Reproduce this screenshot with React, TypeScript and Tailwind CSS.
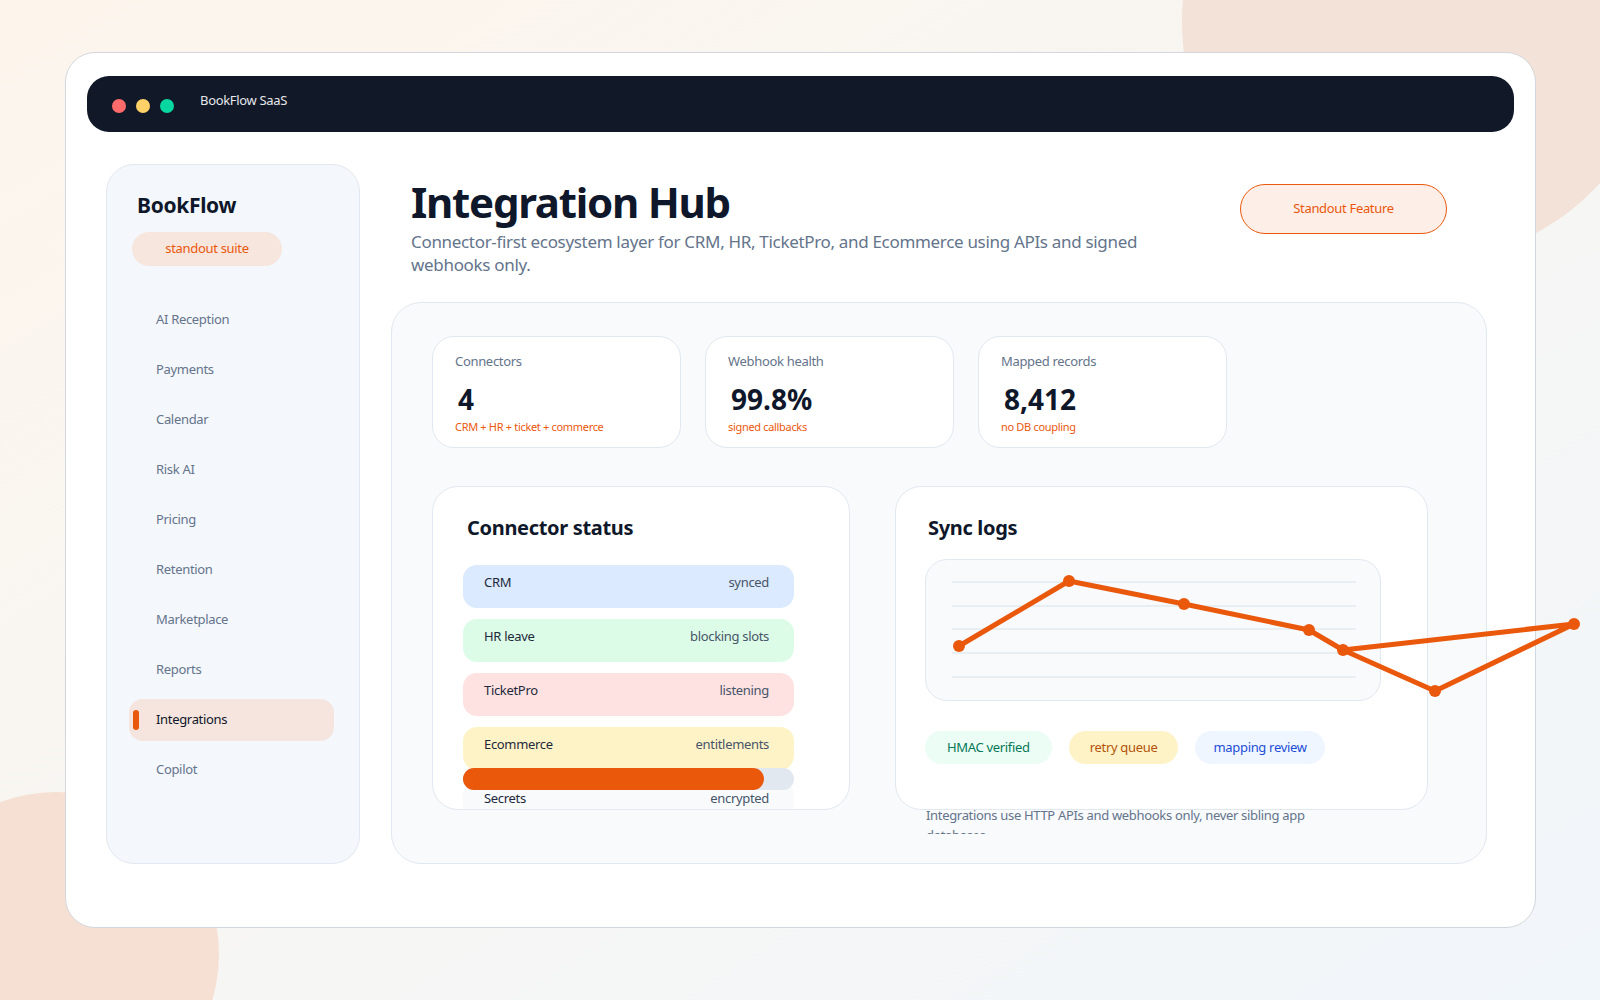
import React from 'react';

const navItems = [
  'AI Reception',
  'Payments',
  'Calendar',
  'Risk AI',
  'Pricing',
  'Retention',
  'Marketplace',
  'Reports',
  'Integrations',
  'Copilot',
];

const stats = [
  { label: 'Connectors', value: '4', note: 'CRM + HR + ticket + commerce' },
  { label: 'Webhook health', value: '99.8%', note: 'signed callbacks' },
  { label: 'Mapped records', value: '8,412', note: 'no DB coupling' },
];

const connectors = [
  { name: 'CRM', state: 'synced', bg: 'bg-[#dbeafe]' },
  { name: 'HR leave', state: 'blocking slots', bg: 'bg-[#dcfce7]' },
  { name: 'TicketPro', state: 'listening', bg: 'bg-[#fee2e2]' },
  { name: 'Ecommerce', state: 'entitlements', bg: 'bg-[#fef3c7]' },
];

// chart points, px inside the chart box
const points: [number, number][] = [
  [33, 86],
  [143, 21],
  [258, 44],
  [383, 70],
  [417, 90],
  [509, 131],
  [648, 64],
  [417, 90],
];

const SyncChart = () => (
  <svg className="absolute inset-0 h-full w-full overflow-visible">
    {[22, 46, 69, 93, 117].map((y) => (
      <line key={y} x1={26} x2={430} y1={y} y2={y} stroke="#e5eaf1" strokeWidth={1.5} />
    ))}
    <polyline
      points={points.map((p) => p.join(',')).join(' ')}
      fill="none"
      stroke="#ea580c"
      strokeWidth={5}
      strokeLinejoin="round"
      strokeLinecap="round"
    />
    {points.slice(0, 7).map(([x, y]) => (
      <circle key={`${x}-${y}`} cx={x} cy={y} r={6} fill="#ea580c" />
    ))}
  </svg>
);

const App = () => {
  return (
    <div className="relative h-[1000px] w-full overflow-hidden bg-gradient-to-br from-[#fdf5ec] via-[#f7f6f3] to-[#f1f6fb] font-['Noto_Sans','Open_Sans',sans-serif] tracking-[-0.02em]">
      {/* background blobs */}
      <div className="absolute left-[1182px] top-[-218px] h-[480px] w-[480px] rounded-full bg-[#f3e2d8]" />
      <div className="absolute left-[-105px] top-[792px] h-[324px] w-[324px] rounded-full bg-[#f6e0d3]" />

      {/* window */}
      <div className="relative ml-[65px] mt-[52px] h-[876px] w-[1471px] rounded-[30px] border border-[#d3d7dd] bg-white">
        {/* title bar */}
        <div className="mx-[21px] mt-[23px] flex h-[56px] items-start rounded-[22px] bg-[#111827] pl-[25px]">
          <div className="mt-[23px] flex gap-[10px]">
            <span className="h-[14px] w-[14px] rounded-full bg-[#ff6b6b]" />
            <span className="h-[14px] w-[14px] rounded-full bg-[#ffd166]" />
            <span className="h-[14px] w-[14px] rounded-full bg-[#06d6a0]" />
          </div>
          <span className="ml-[26px] mt-[15px] text-[13px] leading-[18px] text-[#e5e7eb]">BookFlow SaaS</span>
        </div>

        <div className="ml-[40px] mt-[32px] flex gap-[31px]">
          {/* sidebar */}
          <aside className="h-[700px] w-[254px] rounded-[28px] border border-[#e2e8f0] bg-[#f4f7fb] pt-[26px]">
            <h2 className="pl-[30px] text-[21px] font-bold leading-[28px] text-[#0f172a]">BookFlow</h2>
            <div className="ml-[25px] mt-[13px] flex h-[34px] w-[150px] items-center justify-center rounded-full bg-[#f6e6de] text-[13px] text-[#ea580c]">
              standout suite
            </div>
            <nav className="ml-[22px] mt-[33px] flex flex-col gap-[8px]">
              {navItems.map((item) => {
                const active = item === 'Integrations';
                return (
                  <div
                    key={item}
                    className={`flex h-[42px] w-[205px] items-center rounded-[14px] pl-[4px] text-[13px] ${
                      active ? 'bg-[#f5e5de] text-[#0f172a]' : 'text-[#64748b]'
                    }`}
                  >
                    <span className={`h-[20px] w-[6px] rounded-full ${active ? 'bg-[#ea580c]' : ''}`} />
                    <span className="ml-[17px]">{item}</span>
                  </div>
                );
              })}
            </nav>
          </aside>

          {/* main */}
          <main className="flex w-[1096px] flex-col">
            <header className="flex items-start justify-between pl-[20px] pr-[40px] pt-[14px]">
              <div>
                <h1 className="text-[42px] font-bold leading-[48px] tracking-[-0.03em] text-[#0f172a]">Integration Hub</h1>
                <p className="mt-[4px] max-w-[760px] text-[17px] leading-[23px] text-[#64748b]">
                  Connector-first ecosystem layer for CRM, HR, TicketPro, and Ecommerce using APIs and signed webhooks only.
                </p>
              </div>
              <button className="mt-[6px] h-[50px] w-[207px] rounded-full border-[1.5px] border-[#ea580c] bg-[#fdeee7] text-[13px] text-[#ea580c]">
                Standout Feature
              </button>
            </header>

            <section className="mt-[26px] h-[562px] rounded-[30px] border border-[#e2e8f0] bg-[#f8fafc] pl-[40px] pt-[33px]">
              {/* stats */}
              <div className="flex gap-[24px]">
                {stats.map((s) => (
                  <div key={s.label} className="h-[112px] w-[249px] rounded-[22px] border border-[#e2e8f0] bg-white px-[22px] pt-[15px]">
                    <div className="text-[13px] leading-[18px] text-[#64748b]">{s.label}</div>
                    <div className="ml-[3px] mt-[12px] text-[28px] font-bold leading-[34px] tracking-normal text-[#0f172a]">{s.value}</div>
                    <div className="mt-[3px] text-[11px] leading-[16px] text-[#ea580c]">{s.note}</div>
                  </div>
                ))}
              </div>

              <div className="mt-[38px] flex items-start gap-[45px]">
                {/* connector status */}
                <div className="h-[324px] w-[418px] overflow-hidden rounded-[26px] border border-[#e2e8f0] bg-white pl-[30px] pt-[27px]">
                  <h3 className="pl-[4px] text-[20px] font-bold leading-[28px] text-[#0f172a]">Connector status</h3>
                  <div className="mt-[23px] flex flex-col">
                    {connectors.map((c, i) => (
                      <div
                        key={c.name}
                        className={`flex h-[43px] w-[331px] items-start justify-between rounded-[14px] pl-[21px] pr-[25px] pt-[8px] text-[13px] leading-[18px] ${c.bg} ${
                          i > 0 ? 'mt-[11px]' : ''
                        }`}
                      >
                        <span className="text-[#1e293b]">{c.name}</span>
                        <span className="text-[#475569]">{c.state}</span>
                      </div>
                    ))}
                    <div className="relative z-10 -mt-[2px] h-[22px] w-[331px] rounded-full bg-[#e2e8f0]">
                      <div className="h-full w-[91%] rounded-full bg-[#ea580c]" />
                    </div>
                    <div className="-mt-[9px] flex h-[43px] w-[331px] items-start justify-between rounded-[14px] bg-[#f8fafc] pl-[21px] pr-[25px] pt-[8px] text-[13px] leading-[18px]">
                      <span className="text-[#1e293b]">Secrets</span>
                      <span className="text-[#475569]">encrypted</span>
                    </div>
                  </div>
                </div>

                {/* sync logs */}
                <div className="flex w-[533px] flex-col">
                  <div className="relative z-10 h-[324px] rounded-[26px] border border-[#e2e8f0] bg-white pl-[29px] pt-[27px]">
                    <h3 className="pl-[3px] text-[20px] font-bold leading-[28px] text-[#0f172a]">Sync logs</h3>
                    <div className="relative mt-[17px] h-[142px] w-[456px] rounded-[22px] border border-[#e2e8f0] bg-[#f8fafc]">
                      <SyncChart />
                    </div>
                    <div className="mt-[30px] flex gap-[17px] text-[13px]">
                      <span className="flex h-[33px] items-center rounded-full bg-[#ecfdf5] px-[22px] text-[#047857]">HMAC verified</span>
                      <span className="flex h-[33px] items-center rounded-full bg-[#fef3c7] px-[21px] text-[#b45309]">retry queue</span>
                      <span className="flex h-[33px] items-center rounded-full bg-[#eff6ff] px-[18px] text-[#1d4ed8]">mapping review</span>
                    </div>
                  </div>
                  <p className="-mt-[5px] h-[29px] w-[430px] overflow-hidden pl-[31px] text-[13px] leading-[20px] text-[#64748b]">
                    Integrations use HTTP APIs and webhooks only, never sibling app databases.
                  </p>
                </div>
              </div>
            </section>
          </main>
        </div>
      </div>
    </div>
  );
};

export default App;
